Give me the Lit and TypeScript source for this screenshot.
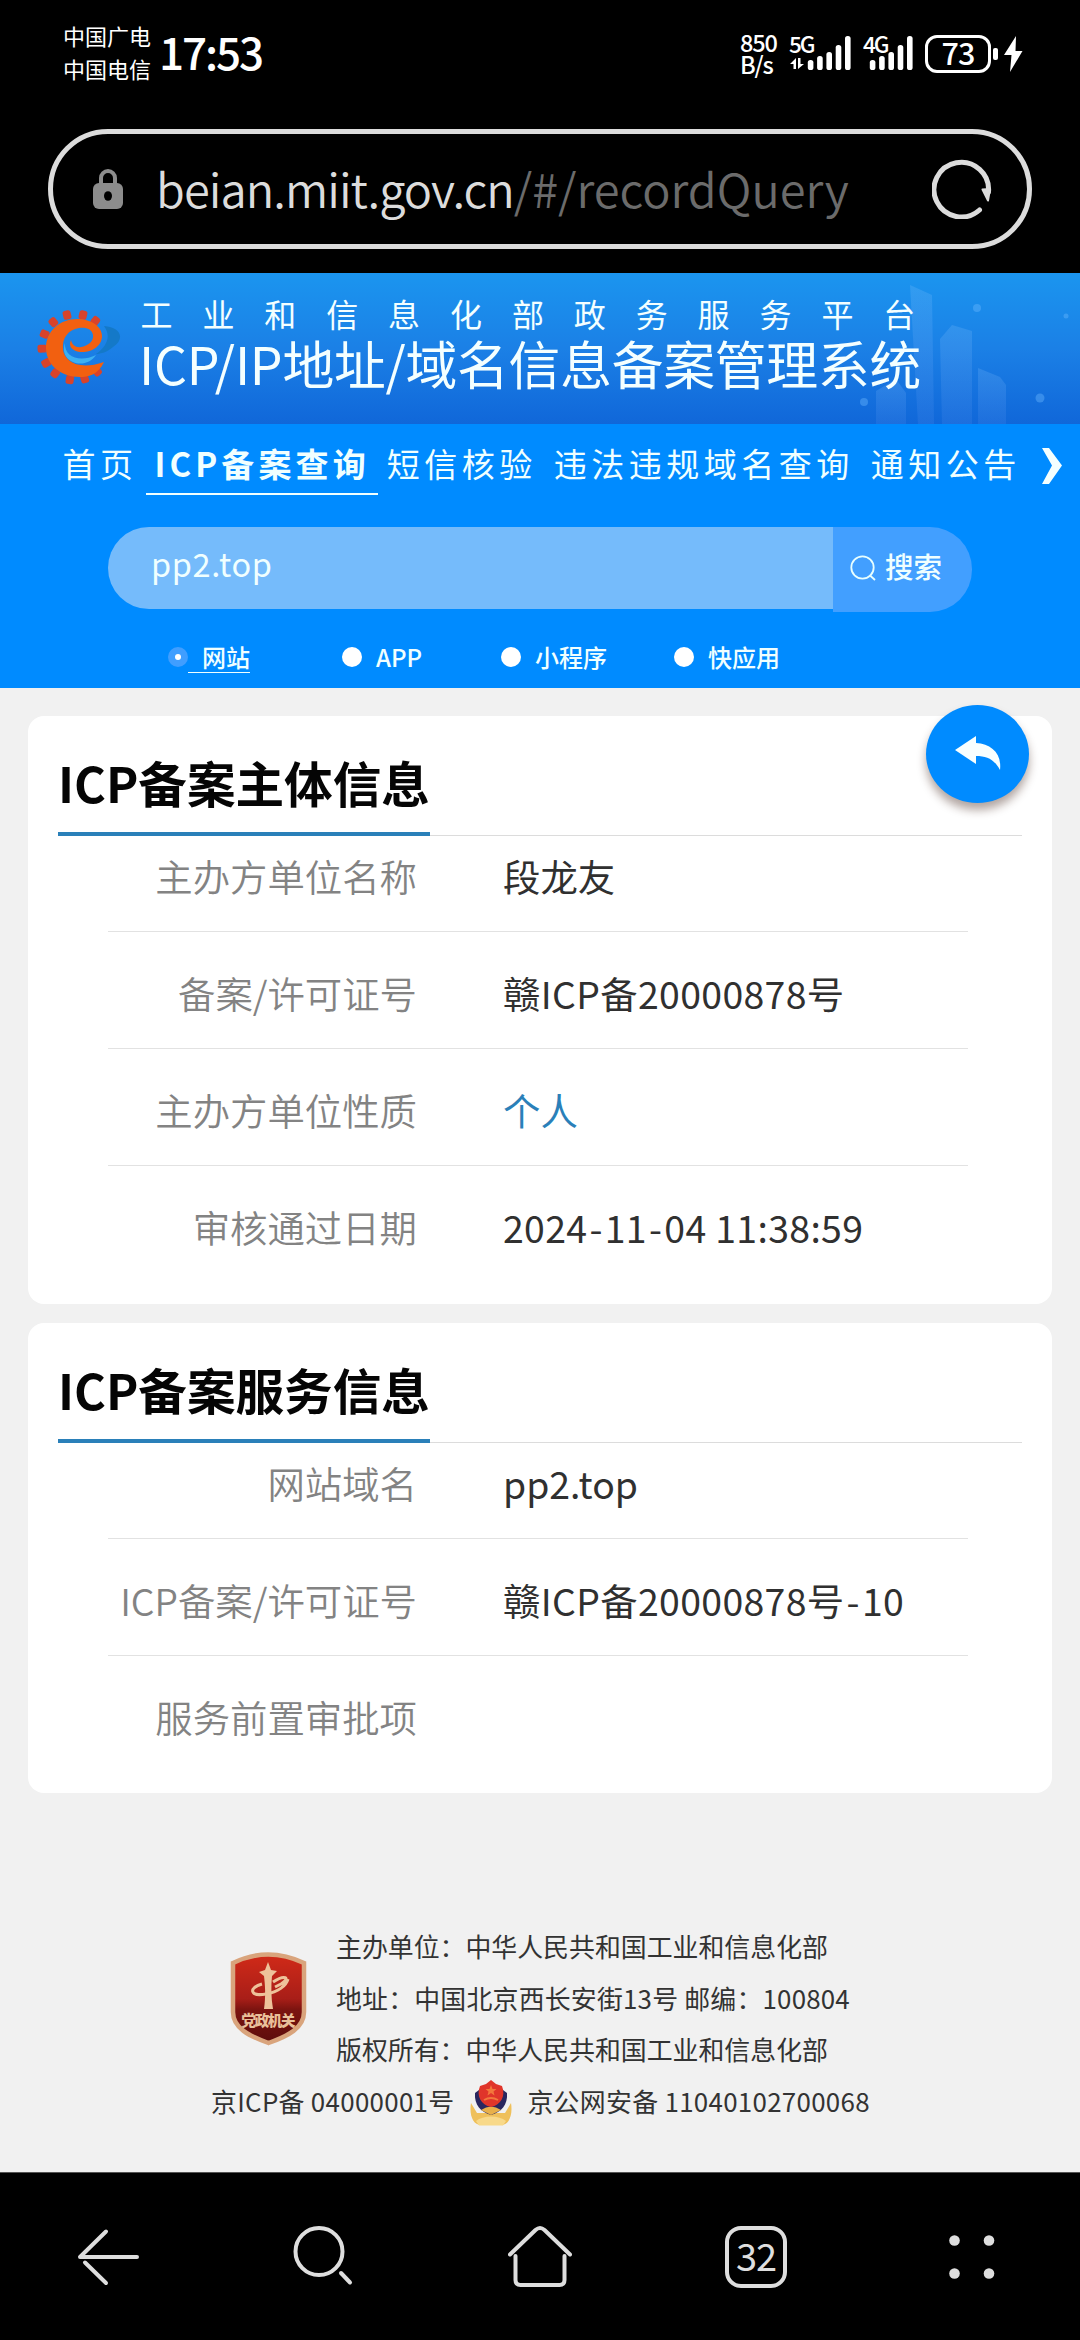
import { LitElement, html, css, svg } from 'lit';
import { customElement, property, state } from 'lit/decorators.js';
import { classMap } from 'lit/directives/class-map.js';

interface InfoRow {
  label: string;
  value: string;
  link?: boolean;
}

interface QueryType {
  key: string;
  text: string;
}

@customElement('status-bar')
export class StatusBar extends LitElement {
  static styles = css`
    :host {
      display: flex;
      justify-content: space-between;
      box-sizing: border-box;
      height: 129px;
      padding: 18px 57px 0 63px;
      color: #fff;
    }

    .left,
    .right {
      display: flex;
      align-items: center;
      height: 72px;
    }

    .carriers {
      padding-bottom: 5px;
      font-size: 22px;
      line-height: 33px;
    }

    .time {
      margin-left: 8px;
      padding-bottom: 5px;
      font-size: 44px;
      font-weight: 500;
      line-height: 67px;
      letter-spacing: -2.1px;
    }

    .speed {
      width: 38px;
      padding-bottom: 3px;
      font-size: 23.5px;
      font-weight: 500;
      line-height: 22px;
      letter-spacing: -1.2px;
    }

    svg {
      display: block;
    }

    .sim {
      margin-left: 11px;
    }

    .sim + .sim {
      margin-left: 9px;
    }

    .sim text {
      font-size: 22.5px;
      font-weight: 500;
      letter-spacing: -2px;
    }

    .battery {
      display: flex;
      align-items: center;
      justify-content: center;
      box-sizing: border-box;
      width: 66px;
      height: 38px;
      margin-left: 12px;
      padding-bottom: 4px;
      border: 3.5px solid #fff;
      border-radius: 12px;
      font-size: 30.5px;
      font-weight: 500;
      line-height: 27px;
      letter-spacing: -1px;
    }

    .nub {
      width: 5px;
      height: 12px;
      margin: 0 6px 0 2px;
      border-radius: 2px;
      background: #fff;
    }
  `;

  bars = [10, 14, 18, 25, 34];

  renderSim(name: string, data: boolean) {
    const width = data ? 63 : 52;
    const start = data ? 18.8 : 8.8;
    return html`
      <svg class="sim" width="${width}" height="60" viewBox="0 -10 ${width} 60" fill="#fff">
        <text x="${data ? 0 : 2}" y="18.5">${name}</text>
        ${data ? svg`<path d="M1 30L7 24V35H4.5V30ZM9 24H11.5V30H15L9 35Z" />` : ''}
        ${this.bars.map((h, i) => svg`
          <rect x="${start + i * 9.3}" y="${36 - h}" width="5.6" height="${h}" rx="2.6" />
        `)}
      </svg>
    `;
  }

  render() {
    return html`
      <div class="left">
        <div class="carriers">
          <div>中国广电</div>
          <div>中国电信</div>
        </div>
        <div class="time">17:53</div>
      </div>
      <div class="right">
        <div class="speed">
          <div>850</div>
          <div>B/s</div>
        </div>
        ${this.renderSim('5G', true)}
        ${this.renderSim('4G', false)}
        <div class="battery">73</div>
        <div class="nub"></div>
        <svg width="19" height="36" viewBox="0 0 19 36">
          <path d="M12 0L0 19H7.5L6 36L18.5 15H11.5Z" fill="#fff" />
        </svg>
      </div>
    `;
  }
}

@customElement('address-bar')
export class AddressBar extends LitElement {
  @property() host = '';
  @property() path = '';

  static styles = css`
    :host {
      display: flex;
      align-items: center;
      box-sizing: border-box;
      height: 120px;
      margin: 0 48px 24px;
      padding: 0 35px 0 40px;
      border: 5px solid #dcdcdc;
      border-radius: 60px;
      font-size: 47px;
      line-height: 60px;
      color: #6b6b6b;
    }

    .url {
      flex: 1;
      margin-left: 33px;
      padding-bottom: 2px;
      font-weight: 350;
      white-space: nowrap;
    }

    .host {
      color: #dcdcdc;
      letter-spacing: -0.95px;
    }

    svg {
      display: block;
    }
  `;

  render() {
    return html`
      <svg width="30" height="40" viewBox="0 0 30 40">
        <path d="M8 16V9a7 7 0 0 1 14 0V16" fill="none" stroke="#8c8c8c" stroke-width="4" />
        <rect y="14" width="30" height="26" rx="6" fill="#8c8c8c" />
        <ellipse cx="15" cy="27" rx="4" ry="4.8" fill="#000" />
      </svg>
      <div class="url"><span class="host">${this.host}</span><span class="path">${this.path}</span></div>
      <svg width="60" height="60" viewBox="0 0 60 60">
        <path d="M56.5 33A27.3 27.3 0 1 0 47.5 51" fill="none" stroke="#dcdcdc" stroke-width="5" stroke-linecap="round" />
        <path d="M50.5 30.5L58 30L56 41.500Z" fill="#dcdcdc" stroke="#dcdcdc" stroke-width="2" stroke-linejoin="round" />
      </svg>
    `;
  }
}

@customElement('site-banner')
export class SiteBanner extends LitElement {
  static styles = css`
    :host {
      display: flex;
      position: relative;
      box-sizing: border-box;
      height: 151px;
      padding: 24px 0 0 36px;
      background: linear-gradient(#1b95ef, #1b80e6 50%, #1067d9);
      color: #f4ffff;
      overflow: hidden;
    }

    .skyline {
      position: absolute;
      right: 0;
      bottom: 0;
    }

    .logo {
      display: block;
      margin-top: 10px;
    }

    .titles {
      position: relative;
      margin-left: 17px;
      white-space: nowrap;
    }

    .ministry {
      padding-left: 1.5px;
      font-size: 32px;
      line-height: 32px;
      letter-spacing: 29.9px;
    }

    .system {
      margin-top: 7px;
      font-size: 51.8px;
      line-height: 54px;
      letter-spacing: -0.25px;
    }
  `;

  teeth = [-52, -76, -104, -131, -157, -183, -209, -233, -261, -287, -312];

  render() {
    return html`
      <svg class="skyline" width="480" height="151" viewBox="0 0 480 151">
        <defs>
          <linearGradient id="tower" x1="0" y1="0" x2="0" y2="1">
            <stop offset="0" stop-color="#8fc8ff" stop-opacity="0.2" />
            <stop offset="1" stop-color="#8fb4ff" stop-opacity="0.1" />
          </linearGradient>
        </defs>
        <path d="M310 12L332 22L334 151H318Z" fill="url(#tower)" />
        <path d="M340 66L352 52L372 58V151H342Z" fill="url(#tower)" />
        <path d="M378 95L400 104L406 112V151H378Z" fill="url(#tower)" />
        <path d="M276 118L296 106L306 120V151H276Z" fill="url(#tower)" />
        <g fill="#6db9ff" opacity="0.4">
          <circle cx="377" cy="35" r="4" />
          <circle cx="440" cy="125" r="4.5" />
          <circle cx="264" cy="129" r="4" />
          <circle cx="466" cy="43" r="2.5" />
        </g>
      </svg>
      <svg class="logo" width="86" height="84" viewBox="0 0 86 84">
        <path d="M68 19C84 20 90 31 77 40C71 45 65 47 60 47C70 40 76 30 68 19Z" fill="#1479c8" />
        <path d="M29 36C28 50 44 56 60 48C50 64 22 56 29 36Z" fill="#3cb0f2" />
        ${this.teeth.map(a => svg`
          <rect x="67.5" y="36" width="9" height="8" rx="2.5" fill="#d8432b" transform="rotate(${a} 39 40)" />
        `)}
        <path d="M68 55C62 68 52 70 44 70C24 70 10 57 10 41C10 24 24 12 41 12C56 12 66 20 66 29C66 40 54 46 44 45C36 44 32 39 35 33C36 38 40 41 45 40C52 39 58 34 57 28C56 22 50 20 43 21C32 23 26 31 27 42C28 54 42 64 68 55Z" fill="#f26010" />
      </svg>
      <div class="titles">
        <div class="ministry">工业和信息化部政务服务平台</div>
        <div class="system">ICP/IP地址/域名信息备案管理系统</div>
      </div>
    `;
  }
}

@customElement('site-nav')
export class SiteNav extends LitElement {
  @state() items: string[] = ['首页', 'ICP备案查询', '短信核验', '违法违规域名查询', '通知公告'];
  @state() active = 'ICP备案查询';

  static styles = css`
    :host {
      display: flex;
      box-sizing: border-box;
      height: 71px;
      padding-left: 54px;
      color: #f0ffff;
      font-size: 33px;
      line-height: 33px;
      letter-spacing: 4.5px;
      white-space: nowrap;
    }

    a {
      padding: 23px 8.5px 0;
      box-sizing: border-box;
      height: 71px;
    }

    a.active {
      border-bottom: 2px solid #f0ffff;
      font-weight: 700;
      letter-spacing: 4.1px;
    }

    svg {
      display: block;
      margin: 23px 0 0 12px;
    }
  `;

  render() {
    return html`
      ${this.items.map(text => html`<a class=${classMap({ active: text === this.active })}>${text}</a>`)}
      <svg width="22" height="38" viewBox="0 0 22 38">
        <path d="M1 1H8L21 18.5L8 37H1L11 18.5Z" fill="#f4ffff" />
      </svg>
    `;
  }
}

@customElement('search-panel')
export class SearchPanel extends LitElement {
  @state() keyword = 'pp2.top';
  @state() selected = 'site';
  @state() types: QueryType[] = [
    { key: 'site', text: '网站' },
    { key: 'app', text: 'APP' },
    { key: 'mini', text: '小程序' },
    { key: 'quick', text: '快应用' }
  ];

  static styles = css`
    :host {
      display: block;
      box-sizing: border-box;
      height: 193px;
      padding-top: 32px;
      color: #f0ffff;
    }

    .search {
      display: flex;
      align-items: flex-start;
      margin: 0 108px;
    }

    .input {
      box-sizing: border-box;
      width: 725px;
      height: 82px;
      padding-left: 43px;
      border-radius: 42px 0 0 42px;
      background: #75bbfb;
      font-size: 32.5px;
      line-height: 71px;
      letter-spacing: 0.6px;
    }

    .button {
      display: flex;
      align-items: center;
      box-sizing: border-box;
      width: 139px;
      height: 85px;
      padding: 0 0 4px 17px;
      border-radius: 0 42px 42px 0;
      background: #429fff;
      font-size: 28.5px;
      font-weight: 500;
      line-height: 40px;
    }

    .button svg {
      margin-right: 9px;
    }

    .button span {
      padding-bottom: 4px;
    }

    .types {
      display: grid;
      grid-template-columns: 174px 159px 173px 120px;
      margin: 29px 0 0 168px;
      font-size: 24px;
      font-weight: 500;
      line-height: 32px;
    }

    .type {
      display: flex;
      align-items: center;
    }

    .dot {
      width: 20px;
      height: 20px;
      border-radius: 50%;
      background: #fff;
    }

    .name {
      padding-left: 14px;
    }

    .selected .dot {
      display: flex;
      align-items: center;
      justify-content: center;
      background: #409eff;
    }

    .selected .dot::after {
      content: '';
      width: 6px;
      height: 6px;
      border-radius: 50%;
      background: #fff;
    }

    .selected .name {
      border-bottom: 1px solid #f0ffff;
      line-height: 30px;
    }
  `;

  render() {
    return html`
      <div class="search">
        <div class="input">${this.keyword}</div>
        <div class="button">
          <svg width="26" height="26" viewBox="0 0 26 26" fill="none" stroke="#e8ffff" stroke-width="1.8">
            <circle cx="12.5" cy="12.5" r="11.2" />
            <path d="M19.5 20L25 25" />
          </svg>
          <span>搜索</span>
        </div>
      </div>
      <div class="types">
        ${this.types.map(({ key, text }) => html`
          <div class=${classMap({ type: true, selected: key === this.selected })}>
            <span class="dot"></span>
            <span class="name">${text}</span>
          </div>
        `)}
      </div>
    `;
  }
}

@customElement('info-card')
export class InfoCard extends LitElement {
  @property() heading = '';
  @property({ attribute: false }) rows: InfoRow[] = [];

  static styles = css`
    :host {
      display: block;
      box-sizing: border-box;
      padding: 38px 30px 20px;
      border-radius: 16px;
      background: #fff;
    }

    .head {
      display: flex;
      border-bottom: 1px solid #dcdcdc;
    }

    h2 {
      margin: 0 0 -1px;
      height: 78px;
      border-bottom: 4px solid #2a80b9;
      color: #050505;
      font-size: 48.6px;
      font-weight: 700;
      line-height: 57px;
      white-space: nowrap;
    }

    .rows {
      margin: 0 54px 0 50px;
    }

    .row {
      display: grid;
      grid-template-columns: 309px 1fr;
      column-gap: 86px;
      box-sizing: border-box;
      height: 117.2px;
      padding-top: 37px;
      border-bottom: 1px solid #e2e2e2;
      font-size: 37.4px;
      line-height: 48px;
      white-space: nowrap;
    }

    .row:first-child {
      height: 96px;
      padding-top: 16px;
    }

    .row:last-child {
      border-bottom: none;
    }

    .label {
      justify-self: end;
      color: #838383;
      font-weight: 350;
    }

    .value {
      color: #303030;
    }

    .value.number {
      letter-spacing: 0.35px;
    }

    .value.link {
      color: #2a80b9;
    }

    .dash {
      padding: 0 2px;
    }
  `;

  renderValue(value: string) {
    return value.split('-').map((part, i) => i ? html`<span class="dash">-</span>${part}` : part);
  }

  render() {
    return html`
      <div class="head"><h2>${this.heading}</h2></div>
      <div class="rows">
        ${this.rows.map(({ label, value, link }) => html`
          <div class="row">
            <span class="label">${label}</span>
            <span class=${classMap({ value: true, link: !!link, number: /\d{4}/.test(value) })}>${this.renderValue(value)}</span>
          </div>
        `)}
      </div>
    `;
  }
}

@customElement('site-footer')
export class SiteFooter extends LitElement {
  static styles = css`
    :host {
      display: block;
      color: #333;
      font-size: 25.9px;
      line-height: 51.7px;
      white-space: nowrap;
    }

    .top {
      display: flex;
      margin-left: 230px;
    }

    .top svg {
      display: block;
      margin: 32px 29px 0 0;
    }

    .top text {
      font-size: 14.5px;
      font-weight: 900;
    }

    .address {
      letter-spacing: 0.2px;
    }

    .bottom {
      display: flex;
      align-items: center;
      margin-left: 211px;
      letter-spacing: 0.3px;
    }

    .bottom svg {
      display: block;
      margin: 4px 14px 0 15px;
    }
  `;

  render() {
    return html`
      <div class="top">
        <svg width="77" height="94" viewBox="0 0 77 94">
          <defs>
            <linearGradient id="shield" x1="0" y1="0" x2="0" y2="1">
              <stop offset="0" stop-color="#d12a18" />
              <stop offset="0.5" stop-color="#a81e18" />
              <stop offset="0.62" stop-color="#7c1410" />
              <stop offset="1" stop-color="#5c0d0c" />
            </linearGradient>
          </defs>
          <path d="M3 11Q38 -6 74 11V60C74 76 58 84 38.5 91C19 84 3 76 3 60Z" fill="url(#shield)" stroke="#d9a47c" stroke-width="4.5" />
          <path d="M34 57C36 44 35 32 34 24L29 20L35 18L38 10L41 18L47 19L42 24C41 34 41 46 43 57Z" fill="#eec29a" />
          <path d="M43 30C55 22 61 26 51 32L45 35M32 32C18 36 20 45 36 42C48 40 56 34 58 27" fill="none" stroke="#eec29a" stroke-width="3" />
          <text x="38.5" y="74" text-anchor="middle" textLength="54" fill="#e9c09a">党政机关</text>
        </svg>
        <div>
          <div>主办单位：中华人民共和国工业和信息化部</div>
          <div class="address">地址：中国北京西长安街13号 邮编：100804</div>
          <div>版权所有：中华人民共和国工业和信息化部</div>
        </div>
      </div>
      <div class="bottom">
        <span>京ICP备 04000001号</span>
        <svg width="44" height="48" viewBox="0 0 44 48">
          <path d="M2 24C0 36 4 46 12 46H32C40 46 44 36 42 24L36 34H8Z" fill="#efc05a" />
          <path d="M7 42C14 36 30 36 37 42L34 46.5H10Z" fill="#f8d98a" />
          <path d="M6 14L14 8H30L38 14C39 26 32 33 22 36C12 33 5 26 6 14Z" fill="#29275f" />
          <path d="M12 31Q22 24 32 31L22 36Z" fill="#e8b04a" />
          <path d="M22 1L27 5L33 7C37 17 32 26 22 28C12 26 7 17 11 7L17 5Z" fill="#e0352a" />
          <path d="M22 6L23.5 10H27.5L24.5 12.5L25.5 16.5L22 14L18.5 16.5L19.5 12.5L16.5 10H20.5Z" fill="#f3783c" />
          <path d="M15 21Q22 17 29 21" fill="none" stroke="#f3783c" stroke-width="2" />
        </svg>
        <span>京公网安备 11040102700068</span>
      </div>
    `;
  }
}

@customElement('bottom-bar')
export class BottomBar extends LitElement {
  @property({ type: Number }) tabs = 0;

  static styles = css`
    :host {
      display: grid;
      grid-template-columns: repeat(5, 1fr);
      justify-items: center;
      align-items: center;
      box-sizing: border-box;
      height: 168px;
      border-top: 1px solid #555;
      background: #000;
    }

    svg {
      display: block;
      fill: none;
      stroke: #dedede;
      stroke-width: 4px;
      stroke-linecap: round;
      stroke-linejoin: round;
    }

    .dots {
      fill: #dedede;
      stroke: none;
    }

    .tabs {
      display: flex;
      align-items: center;
      justify-content: center;
      box-sizing: border-box;
      width: 62px;
      height: 62px;
      padding-bottom: 5px;
      border: 4px solid #dedede;
      border-radius: 16px;
      color: #dedede;
      font-size: 38px;
      line-height: 49px;
      letter-spacing: -1px;
    }
  `;

  render() {
    return html`
      <svg width="64" height="64" viewBox="0 0 64 64">
        <path d="M61 32H4L30 6.5M9 37.5L30 58" />
      </svg>
      <svg width="64" height="64" viewBox="0 0 64 64">
        <circle cx="27" cy="26.5" r="23.5" />
        <path d="M49 48L58 57.5" />
      </svg>
      <svg width="64" height="64" viewBox="0 0 64 64">
        <path d="M2 29.5L27.5 5Q32 1 36.5 5L62 29.5M7.5 31V55Q7.5 60 12.5 60H51.5Q56.5 60 56.5 55V31" />
      </svg>
      <div class="tabs">${this.tabs}</div>
      <svg class="dots" width="64" height="64" viewBox="0 0 64 64">
        <circle cx="14.5" cy="15.5" r="5.3" />
        <circle cx="49" cy="15.5" r="5.3" />
        <circle cx="14.5" cy="48.5" r="5.3" />
        <circle cx="49" cy="48.5" r="5.3" />
      </svg>
    `;
  }
}

@customElement('app-root')
export class AppRoot extends LitElement {
  @state() subject: InfoRow[] = [
    { label: '主办方单位名称', value: '段龙友' },
    { label: '备案/许可证号', value: '赣ICP备20000878号' },
    { label: '主办方单位性质', value: '个人', link: true },
    { label: '审核通过日期', value: '2024-11-04 11:38:59' }
  ];

  @state() service: InfoRow[] = [
    { label: '网站域名', value: 'pp2.top' },
    { label: 'ICP备案/许可证号', value: '赣ICP备20000878号-10' },
    { label: '服务前置审批项', value: '' }
  ];

  static styles = css`
    :host {
      display: flex;
      flex-direction: column;
      width: 1080px;
      height: 2340px;
      overflow: hidden;
      background: #000;
      font-family: 'Noto Sans CJK SC', 'Noto Sans', sans-serif;
    }

    .blue {
      background: #008bff;
    }

    main {
      position: relative;
      flex: 1;
      display: flex;
      flex-direction: column;
      gap: 19px;
      padding: 28px 28px 0;
      background: #f1f1f1;
    }

    .back {
      position: absolute;
      top: 17px;
      right: 51px;
      display: flex;
      align-items: center;
      justify-content: center;
      width: 103px;
      height: 98px;
      border-radius: 50%;
      background: #008bff;
      box-shadow: 0 7px 10px rgba(60, 30, 20, 0.4);
    }

    site-footer {
      margin: 108px -28px 0;
    }
  `;

  render() {
    return html`
      <status-bar></status-bar>
      <address-bar host="beian.miit.gov.cn" path="/#/recordQuery"></address-bar>
      <site-banner></site-banner>
      <div class="blue">
        <site-nav></site-nav>
        <search-panel></search-panel>
      </div>
      <main>
        <info-card heading="ICP备案主体信息" .rows=${this.subject}></info-card>
        <info-card heading="ICP备案服务信息" .rows=${this.service}></info-card>
        <div class="back">
          <svg width="48" height="40" viewBox="0 0 48 40">
            <path d="M1 16L22 2V9C37 10 48 19 46 36C40 25 33 22 22 22V30Z" fill="#f8ffff" />
          </svg>
        </div>
        <site-footer></site-footer>
      </main>
      <bottom-bar tabs="32"></bottom-bar>
    `;
  }
}
